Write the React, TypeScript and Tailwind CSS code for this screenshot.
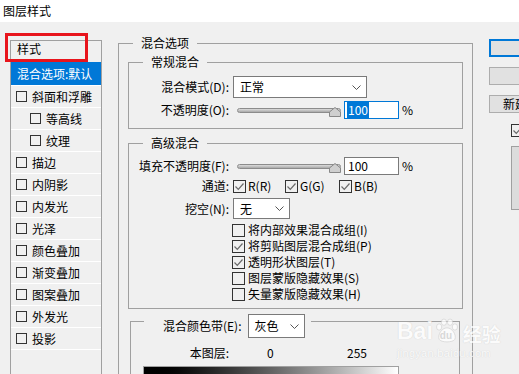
import React from 'react';

function Box({ checked = false, small = false }: { checked?: boolean; small?: boolean }) {
  return (
    <span
      className={`${small ? 'w-[11px] h-[11px]' : 'w-[13px] h-[13px]'} shrink-0 border border-[#333] flex items-center justify-center`}
    >
      {checked && (
        <svg width="11" height="11" viewBox="0 0 11 11" fill="none">
          <path d="M1.5 5.5 L4.3 8.3 L9.5 2.5" stroke="#6a6a6a" strokeWidth="1.2" />
        </svg>
      )}
    </span>
  );
}

function Chevron() {
  return (
    <svg width="9" height="5" viewBox="0 0 9 5" fill="none">
      <path d="M0.5 0.5 L4.5 4.5 L8.5 0.5" stroke="#555" />
    </svg>
  );
}

function Select({ value, className }: { value: string; className: string }) {
  return (
    <div className={`${className} shrink-0 border border-[#7a7a7a] bg-white flex items-center justify-between pl-[6px] pr-[5px]`}>
      <span>{value}</span>
      <Chevron />
    </div>
  );
}

function Slider() {
  return (
    <div className="relative ml-[8px] w-[104px] h-[18px] flex items-center shrink-0">
      <div className="w-full h-[5px] rounded-full border border-[#8c8c8c] bg-gradient-to-b from-[#dcdcdc] to-[#a9a9a9]" />
      <svg className="absolute right-0 top-[6px]" width="12" height="10" viewBox="0 0 12 10">
        <path d="M6 0.5 L11.5 5 L11.5 9.5 L0.5 9.5 L0.5 5 Z" fill="#cfcfcf" stroke="#888" />
      </svg>
    </div>
  );
}

const layers = [
  { label: '斜面和浮雕', sub: false },
  { label: '等高线', sub: true },
  { label: '纹理', sub: true },
  { label: '描边', sub: false },
  { label: '内阴影', sub: false },
  { label: '内发光', sub: false },
  { label: '光泽', sub: false },
  { label: '颜色叠加', sub: false },
  { label: '渐变叠加', sub: false },
  { label: '图案叠加', sub: false },
  { label: '外发光', sub: false },
  { label: '投影', sub: false },
];

const options = [
  { label: '将内部效果混合成组(I)', checked: false },
  { label: '将剪贴图层混合成组(P)', checked: true },
  { label: '透明形状图层(T)', checked: true },
  { label: '图层蒙版隐藏效果(S)', checked: false },
  { label: '矢量蒙版隐藏效果(H)', checked: false },
];

export default function App() {
  return (
    <div className="relative w-[519px] h-[374px] overflow-hidden bg-[#f0f0f0] text-[12px] leading-[16px] text-black font-['Noto_Sans_CJK_SC','Microsoft_YaHei',sans-serif]">
      <div className="h-[22px] bg-white pl-[3px] pt-[3px]">图层样式</div>

      <div className="flex">
        {/* effect list */}
        <div className="ml-[10px] mt-[18px] w-[92px] h-[340px] shrink-0 border border-[#a0a0a0]">
          <div className="h-[21px] pl-[6px]">样式</div>
          <div className="h-[24px] border-b border-white bg-[#0078d7] text-white pl-[6px] flex items-center whitespace-nowrap overflow-hidden">
            混合选项:默认
          </div>
          {layers.map((l) => (
            <div
              key={l.label}
              className={`h-[22px] border-b border-white flex items-center gap-[5px] ${l.sub ? 'pl-[19px]' : 'pl-[5px]'}`}
            >
              <Box small />
              <span>{l.label}</span>
            </div>
          ))}
        </div>

        {/* blending options */}
        <fieldset className="ml-[16px] mt-[13px] w-[355px] h-[400px] shrink-0 border border-[#a0a0a0]">
          <legend className="ml-[14px] px-[8px]">混合选项</legend>
          <div className="px-[9px]">
            <fieldset className="mt-[3px] border border-[#a0a0a0]">
              <legend className="ml-[14px] px-[8px]">常规混合</legend>
              <div className="pb-[9px]">
                <div className="mt-[6px] flex items-center">
                  <span className="w-[100px] text-right shrink-0">混合模式(D):</span>
                  <Select value="正常" className="ml-[4px] w-[134px] h-[22px]" />
                </div>
                <div className="mt-[3px] flex items-center">
                  <span className="w-[100px] text-right shrink-0">不透明度(O):</span>
                  <Slider />
                  <div className="ml-[3px] w-[55px] h-[18px] border border-[#0078d7] bg-white pl-[2px] flex items-center">
                    <span className="bg-[#0078d7] text-white px-[1px]">100</span>
                  </div>
                  <span className="ml-[3px]">%</span>
                </div>
              </div>
            </fieldset>

            <fieldset className="mt-[6px] border border-[#a0a0a0]">
              <legend className="ml-[14px] px-[8px]">高级混合</legend>
              <div className="pb-[6px]">
                <div className="mt-[6px] flex items-center">
                  <span className="w-[100px] text-right shrink-0">填充不透明度(F):</span>
                  <Slider />
                  <div className="ml-[3px] w-[55px] h-[18px] border border-[#7a7a7a] bg-white pl-[3px] flex items-center">
                    100
                  </div>
                  <span className="ml-[3px]">%</span>
                </div>
                <div className="mt-[3px] h-[16px] flex items-center">
                  <span className="w-[100px] text-right shrink-0">通道:</span>
                  <div className="ml-[4px] w-[52px] flex items-center gap-[2px]">
                    <Box checked />
                    <span>R(R)</span>
                  </div>
                  <div className="w-[54px] flex items-center gap-[2px]">
                    <Box checked />
                    <span>G(G)</span>
                  </div>
                  <div className="flex items-center gap-[2px]">
                    <Box checked />
                    <span>B(B)</span>
                  </div>
                </div>
                <div className="mt-[4px] flex items-center">
                  <span className="w-[100px] text-right shrink-0">挖空(N):</span>
                  <Select value="无" className="ml-[4px] w-[57px] h-[21px]" />
                </div>
                <div className="mt-[3px] pl-[103px]">
                  {options.map((o) => (
                    <div key={o.label} className="h-[16px] flex items-center gap-[3px] whitespace-nowrap">
                      <Box checked={o.checked} />
                      <span>{o.label}</span>
                    </div>
                  ))}
                </div>
              </div>
            </fieldset>
          </div>

          <fieldset className="ml-[11px] mr-[12px] mt-[3px] border border-[#a0a0a0]">
            <legend className="ml-[13px] pl-[19px] pr-[6px] h-[18px]">
              <div className="flex items-start">
                <span className="h-[24px] mt-[2px] flex items-center">混合颜色带(E):</span>
                <Select value="灰色" className="ml-[6px] mt-[2px] w-[57px] h-[24px]" />
              </div>
            </legend>
            <div className="mt-[15px] flex">
              <span className="w-[98px] text-right">本图层:</span>
              <span className="ml-[38px] w-[80px]">0</span>
              <span>255</span>
            </div>
            <div className="ml-[12px] mt-[5px] w-[256px] h-[24px] border border-[#a0a0a0] bg-gradient-to-r from-black to-white" />
          </fieldset>
        </fieldset>

        {/* buttons */}
        <div className="ml-[16px] mt-[17px] w-[110px] shrink-0 flex flex-col">
          <div className="w-[100px] h-[18px] border-2 border-[#0078d7] bg-[#e1e1e1] text-center leading-[14px]">确定</div>
          <div className="mt-[10px] w-[100px] h-[18px] border border-[#adadad] bg-[#e1e1e1] text-center">取消</div>
          <div className="mt-[10px] w-[100px] h-[18px] border border-[#adadad] bg-[#e1e1e1] pl-[13px] whitespace-nowrap">新建样式(W)...</div>
          <div className="mt-[9px] ml-[22px] flex items-center gap-[3px] whitespace-nowrap">
            <Box checked />
            <span>预览(V)</span>
          </div>
          <div className="mt-[8px] ml-[22px] w-[60px] h-[64px] border border-[#a0a0a0] bg-[#dcdcdc]" />
        </div>
      </div>

      {/* watermark */}
      <div className="absolute left-[397px] top-[318px] text-white opacity-75 [text-shadow:0_0_1px_#bdbdbd] font-['Liberation_Sans',sans-serif] pointer-events-none">
        <div className="flex items-end leading-none">
          <span className="text-[23px] font-bold">Bai</span>
          <span className="relative w-[28px] h-[25px]">
            <svg className="absolute left-0 top-0" width="28" height="25" viewBox="0 0 32 28">
              <g fill="#ffffff" stroke="#c8c8c8" strokeWidth="0.8">
                <ellipse cx="7" cy="10" rx="3" ry="3.6" />
                <ellipse cx="12.5" cy="4.5" rx="3" ry="3.6" />
                <ellipse cx="19.5" cy="4.5" rx="3" ry="3.6" />
                <ellipse cx="25" cy="10" rx="3" ry="3.6" />
                <path d="M16 11 C10 11 5 19 7 24 C9 28 23 28 25 24 C27 19 22 11 16 11 Z" />
              </g>
            </svg>
            <span className="absolute left-[7px] top-[13px] text-[10px] font-bold text-[#d0d0d0] [text-shadow:none]">du</span>
          </span>
          <span className="ml-[2px] text-[19px] font-bold font-['Noto_Sans_CJK_SC',sans-serif]">经验</span>
        </div>
        <div className="mt-[5px] text-[11px] tracking-[0.3px] leading-none">jingyan.baidu.com</div>
      </div>

      {/* annotation */}
      <div className="absolute left-[5px] top-[33px] w-[83px] h-[29px] border-[3px] border-[#e8141c]" />
    </div>
  );
}
